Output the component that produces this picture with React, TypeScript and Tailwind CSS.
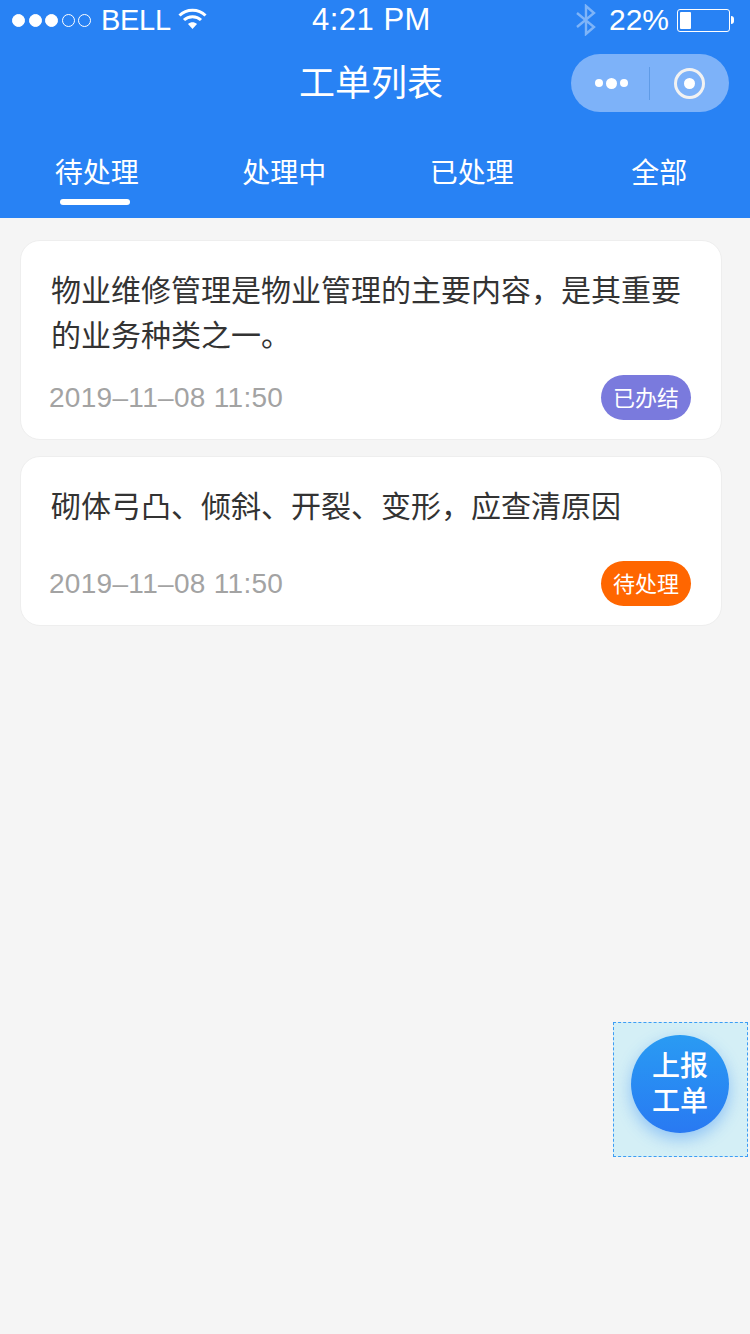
import React from "react";

const sans = "font-['Liberation_Sans','Noto_Sans_CJK_SC',sans-serif]";

function Dots() {
  return (
    <div className="flex items-center gap-[3.5px]">
      {[1, 1, 1, 0, 0].map((f, i) => (
        <span key={i} className={"block w-[13px] h-[13px] rounded-full border border-white " + (f ? "bg-white" : "")} />
      ))}
    </div>
  );
}

function Wifi() {
  return (
    <svg width="29" height="23" viewBox="0 0 29 23" fill="none">
      <path d="M1.5 8.5C8.5 1.5 20.5 1.5 27.5 8.5" stroke="white" strokeWidth="3" />
      <path d="M6 13C10.5 8.5 18.5 8.5 23 13" stroke="white" strokeWidth="3" />
      <path d="M10 17C12.5 14.6 16.5 14.6 19 17L14.5 22Z" fill="white" />
    </svg>
  );
}

function Bluetooth() {
  return (
    <svg width="20" height="32" viewBox="0 0 20 32" fill="none">
      <path d="M1 9L18 23L10 30V2L18 9L1 23" stroke="white" strokeOpacity="0.4" strokeWidth="2.4" />
    </svg>
  );
}

function Battery() {
  return (
    <div className="flex items-center">
      <div className="w-[53px] h-[23px] rounded-[3px] border border-white p-[2px]">
        <div className="w-[11px] h-full bg-white rounded-[1px]" />
      </div>
      <div className="w-[3px] h-[8px] bg-white rounded-r-[3px] ml-[1px]" />
    </div>
  );
}

function Card({ text, status, color, h, dateTop }: { text: React.ReactNode; status: string; color: string; h: string; dateTop: string }) {
  return (
    <div className={"bg-white border border-[#eeeeee] rounded-[20px] ml-[20px] mr-[28px] pl-[30px] pr-[30px] pt-[25px] flex flex-col " + h}>
      <p className="text-[30px] leading-[45px] text-[#333333] whitespace-pre-line">{text}</p>
      <div className={"flex items-center justify-between -ml-[2px] " + dateTop}>
        <span className={"text-[28px] leading-[45px] tracking-[0.3px] text-[#a3a3a3] " + sans}>2019–11–08 11:50</span>
        <span className="w-[90px] h-[45px] rounded-[23px] text-white text-[22px] pb-[3px] flex items-center justify-center" style={{ backgroundColor: color }}>
          {status}
        </span>
      </div>
    </div>
  );
}

export default function App() {
  return (
    <div className={"relative w-[750px] h-[1334px] overflow-hidden bg-[#f5f5f5] font-['Noto_Sans_CJK_SC','Liberation_Sans',sans-serif]"}>
      <header className="bg-[#2882f4] h-[218px] text-white">
        <div className={"relative h-[40px] flex items-center justify-between pl-[12px] pr-[16px] " + sans}>
          <div className="flex items-center">
            <Dots />
            <span className="text-[29px] leading-[40px] ml-[10px] tracking-[-0.3px]">BELL</span>
            <div className="ml-[7px] -mt-[3px]"><Wifi /></div>
          </div>
          <span className="absolute left-[312px] top-0 text-[31px] leading-[40px] tracking-[0.5px]">4:21 PM</span>
          <div className="flex items-center">
            <Bluetooth />
            <span className="text-[30px] leading-[40px] ml-[13px] mr-[8px]">22%</span>
            <Battery />
          </div>
        </div>
        <div className="relative h-[86px] flex items-center justify-center">
          <h1 className="text-[36px] leading-[54px] -ml-[8px] -mt-[7px] font-normal">工单列表</h1>
          <div className="absolute left-[571px] top-[14px] w-[158px] h-[58px] rounded-[29px] bg-[#7db2f9] flex items-center">
            <div className="w-[78px] flex items-center justify-center gap-[3px] pl-[2px]">
              <span className="block w-[8px] h-[8px] rounded-full bg-white" />
              <span className="block w-[11px] h-[11px] rounded-full bg-white" />
              <span className="block w-[8px] h-[8px] rounded-full bg-white" />
            </div>
            <div className="w-px h-[33px] bg-[#5f9be6]" />
            <div className="flex-1 flex items-center justify-center pr-[1px]">
              <div className="w-[31px] h-[31px] rounded-full border-[3px] border-[#f2f2f2] flex items-center justify-center">
                <span className="block w-[11px] h-[11px] rounded-full bg-white" />
              </div>
            </div>
          </div>
        </div>
        <nav className="grid grid-cols-4 w-[750px] ml-[3px] text-[28px] leading-[42px]">
          {["待处理", "处理中", "已处理", "全部"].map((t, i) => (
            <div key={t} className="flex flex-col items-center">
              <span className="mt-[24px]">{t}</span>
              {i === 0 && <span className="block w-[70px] h-[6px] mt-[7px] rounded-[3px] bg-white -ml-[4px]" />}
            </div>
          ))}
        </nav>
      </header>

      <main className="pt-[22px] flex flex-col gap-[16px]">
        <Card h="h-[200px]" dateTop="mt-[19px]" text={"物业维修管理是物业管理的主要内容，是其重要\n的业务种类之一。"} status="已办结" color="#7a7add" />
        <Card h="h-[170px]" dateTop="mt-[34px]" text="砌体弓凸、倾斜、开裂、变形，应查清原因" status="待处理" color="#ff6600" />
      </main>

      <div className="absolute left-[613px] top-[1022px] w-[135px] h-[135px] border border-dashed border-[#3b9df5] bg-[#d4eff6]">
        <div className="absolute left-[17px] top-[12px] w-[98px] h-[98px] rounded-full bg-gradient-to-b from-[#2a9bf3] to-[#2979f2] shadow-[0_6px_16px_rgba(40,130,244,0.4)] text-white text-[28px] leading-[35px] font-medium flex items-center justify-center text-center pb-[4px]">
          <span>上报<br />工单</span>
        </div>
      </div>
    </div>
  );
}
